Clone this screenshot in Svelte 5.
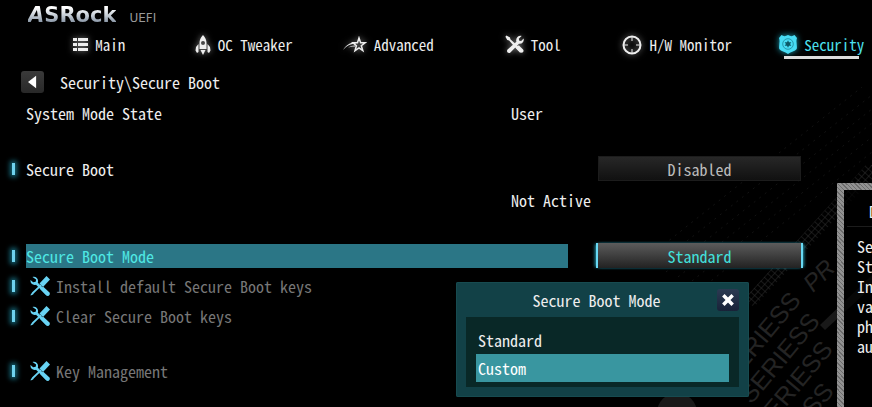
<script lang="ts">
  type Row = {
    id: string;
    label: string;
    text?: string;
    options?: string[];
    value?: string;
    marker?: boolean;
    tool?: boolean;
    gap?: boolean;
  };

  const tabs = [
    { name: "Main", icon: "list" },
    { name: "OC Tweaker", icon: "rocket" },
    { name: "Advanced", icon: "star" },
    { name: "Tool", icon: "tools" },
    { name: "H/W Monitor", icon: "target" },
    { name: "Security", icon: "badge" },
  ];

  const rows: Row[] = [
    { id: "state", label: "System Mode State", text: "User" },
    { id: "boot", label: "Secure Boot", options: ["Disabled", "Enabled"], value: "Disabled", marker: true, gap: true },
    { id: "active", label: "", text: "Not Active" },
    { id: "mode", label: "Secure Boot Mode", options: ["Standard", "Custom"], value: "Standard", marker: true, gap: true },
    { id: "install", label: "Install default Secure Boot keys", marker: true, tool: true },
    { id: "clear", label: "Clear Secure Boot keys", marker: true, tool: true },
    { id: "keys", label: "Key Management", marker: true, tool: true, gap: true },
  ];

  const help = [
    "Secure Boot mode options:",
    "Standard or Custom.",
    "In Custom mode, Secure Boot Policy",
    "variables can be configured by a",
    "physically present user without full",
    "authentication.",
  ];

  let activeTab = $state("Security");
  let selected = $state("mode");
  let open = $state(true);
  let highlighted = $state("Custom");
</script>

{#snippet icon(name: string)}
  {#if name === "list"}
    <svg class="icon" viewBox="0 0 15 15" width="15" height="15">
      <path d="M0 1h4v3H0zM5 1h10v3H5zM0 6h4v3H0zM5 6h10v3H5zM0 11h4v3H0zM5 11h10v3H5z" />
    </svg>
  {:else if name === "rocket"}
    <svg class="icon" viewBox="0 0 16 20" width="16" height="20">
      <path fill-rule="evenodd" d="M8 0C10.500 3 11.500 5 11.500 8v6h-7V8C4.500 5 5.500 3 8 0zM8 6a2 2 0 1 0 0 4 2 2 0 0 0 0-4z" />
      <path d="M3.500 9v8L2 18 .5 15.500 1 12zM12.500 9v8l1.500 1 1.500-2.500L15 12zM5.500 15h5L8 20z" />
    </svg>
  {:else if name === "star"}
    <svg class="icon" viewBox="0 0 24 18" width="24" height="18">
      <path fill="none" stroke="currentColor" stroke-width="1.500" d="M16 2l1.600 4.800H22l-3.700 2.900 1.500 4.900-3.800-2.800-4 2.800 1.400-4.900L10 6.800h4.500z" />
      <path d="M0 14C3 9 7 6.500 12 6.200l1 1.300C8 7.600 4 9.500 0 14zM5 12c2.500-2 4.500-2.600 7.500-2.500l-.5 1c-3-.1-5 .3-7 1.500z" />
    </svg>
  {:else if name === "tools"}
    <svg class="icon" viewBox="0 0 20 20" width="19" height="19">
      <path d="M1.500.5l3.800 2.200.4 1.800 10 9.300 2.800 2.400-2.600 2.600-2.800-3.100L4.300 5.800l-1.900-.5L.4 1.800z" />
      <path d="M17.500 1l-3 3 .5 2 2 .4 2.600-2.600c.8 3-1.600 6-4.900 5.300l-9 9.200c-2 1.600-4.800-.8-3-3L12 7C10.800 3.500 14 .2 17.500 1z" />
      <path d="M12.500 12.500l2-1.800 4.500 4.500c1.600 2-.8 4.500-3 3l-4.500-4.500z" />
    </svg>
  {:else if name === "target"}
    <svg class="icon" viewBox="0 0 20 20" width="20" height="20">
      <circle cx="10" cy="10" r="8.500" fill="none" stroke="currentColor" stroke-width="2" />
      <path stroke="currentColor" stroke-width="1" d="M10 2v4M10 14v4M2 10h4M14 10h4" />
    </svg>
  {:else}
    <svg class="icon" viewBox="0 0 18 19" width="18" height="19">
      <path d="M2.500 0c2 1.500 4 1.500 6.500 0 2.500 1.500 4.500 1.500 6.500 0L18 3c-1.500 4 .5 7-.3 11C16 16.500 12 16.500 9 19c-3-2.500-7-2.500-8.700-5C-.5 10 1.500 7 0 3z" />
      <circle cx="9" cy="9" r="5.300" fill="none" stroke="#2698ac" />
      <path fill="#0d5968" d="M9 5.200l1 2h2.300L11.100 9l1.200 1.800H10l-1 2-1-2H5.700L6.900 9 5.700 7.200H8z" />
    </svg>
  {/if}
{/snippet}

<div class="page">
  <svg class="backdrop" viewBox="0 0 260 320" width="260" height="320" aria-hidden="true">
    <defs>
      <pattern id="mesh" width="5" height="5" patternUnits="userSpaceOnUse" patternTransform="rotate(-48)">
        <path d="M0 0h5M0 0v5" stroke="#303030" fill="none" />
      </pattern>
    </defs>
    <g stroke="#131313" stroke-dasharray="2 5">
      <path d="M30 175L250 0M42 180L260 8M54 185L260 22M66 190L260 36M80 194L260 50M94 198L260 65" />
    </g>
    <path fill="url(#mesh)" d="M132 212L254 78l6 0v14L142 220z" />
    <g class="series" text-anchor="end">
      <text transform="translate(190 214) rotate(-50)">SERIESS</text>
      <text transform="translate(209 235) rotate(-50)">SERIESS</text>
      <text transform="translate(222 263) rotate(-50)">SERIESS</text>
      <text transform="translate(223 305) rotate(-50)">SERIESS</text>
    </g>
    <g class="pro">
      <text transform="translate(201 206) rotate(-45)">PR</text>
    </g>
    <path fill="#191919" d="M208 238l52-50v12l-47 43z" />
    <circle cx="65" cy="326" r="20" fill="#191919" />
  </svg>

  <header>
    <div class="brand">
      <span class="logo"><i>A</i>SRock</span>
      <span class="uefi">UEFI</span>
    </div>
    <nav>
      {#each tabs as tab}
        <button class="tab" class:active={tab.name === activeTab} onclick={() => (activeTab = tab.name)}>
          {@render icon(tab.icon)}
          <span>{tab.name}</span>
        </button>
      {/each}
    </nav>
  </header>

  <div class="crumbs">
    <button class="back" aria-label="Back">
      <svg viewBox="0 0 10 14" width="9" height="14"><path d="M9 0v14L0 7z" /></svg>
    </button>
    <span>Security\Secure Boot</span>
  </div>

  <main>
    <div class="list">
      {#each rows as row}
        <div class="row" class:gap={row.gap} class:selected={row.id === selected} class:tool={row.tool}>
          {#if row.marker}<span class="marker"></span>{/if}
          {#if row.tool}
            <button class="label" onclick={() => (selected = row.id)}>
              <svg viewBox="0 0 20 20" width="20" height="20">
                <path d="M2.500 1C6 0 9 3 7.800 6.800L18.500 17c1.500 2-.5 3.500-2.500 2L6 8.700C3 9.600 0 7.500.5 4l2.700 2.300 2.500-.5.400-2.300z" />
                <path d="M16.500 0L20 3.500l-7 7.500L9.500 7.500z" />
                <path d="M10.500 8.500l1.200 1.200-8 7.800-.6 1L.8 19.500l-.3-.5 1.700-2.800z" />
                <path d="M13 10.500l6.500 6c1.200 2-1 4.300-3 3l-6.200-6.300z" />
              </svg>
              {row.label}
            </button>
          {:else if row.label}
            <label class="label" for={row.id}>{row.label}</label>
          {/if}
          {#if row.options}
            <select id={row.id} bind:value={row.value} onfocus={() => (selected = row.id)}>
              {#each row.options as option}
                <option>{option}</option>
              {/each}
            </select>
          {:else if row.text}
            <output class="text" id={row.id}>{row.text}</output>
          {/if}
        </div>
      {/each}

      {#if open}
        <div class="dialog" role="dialog" aria-labelledby="dialog-title">
          <div class="title">
            <span id="dialog-title">Secure Boot Mode</span>
            <button class="close" aria-label="Close" onclick={() => (open = false)}>
              <svg viewBox="0 0 12 12" width="14" height="14"><path d="M2 2l8 8M10 2l-8 8" /></svg>
            </button>
          </div>
          <div class="options">
            {#each ["Standard", "Custom"] as option}
              <button class:highlighted={option === highlighted} onclick={() => (highlighted = option)}>{option}</button>
            {/each}
          </div>
        </div>
      {/if}
    </div>

    <aside>
      <div class="help">
        <h2>Description</h2>
        <p>
          {#each help as line}{line}<br />{/each}
        </p>
      </div>
    </aside>
  </main>
</div>

<style>
  :global(body) {
    margin: 0;
    background: #000;
  }

  .page {
    position: relative;
    display: flex;
    flex-direction: column;
    min-height: 100vh;
    overflow: hidden;
    isolation: isolate;
    background: #000;
    color: #eee;
    font-family: "Noto Sans Mono CJK JP", "Liberation Mono", monospace;
    font-size: 16px;
    line-height: 20px;
  }

  .backdrop {
    position: absolute;
    right: 0;
    bottom: 0;
    z-index: -1;
    font-family: "Liberation Sans", sans-serif;
  }
  .series {
    fill: #242424;
    font-size: 25px;
  }
  .pro {
    fill: #242424;
    font-size: 24px;
    font-style: italic;
  }

  button,
  select {
    margin: 0;
    padding: 0;
    border: 0;
    background: none;
    color: inherit;
    font: inherit;
    cursor: pointer;
  }

  svg {
    flex: none;
    fill: currentColor;
  }

  .brand {
    display: flex;
    align-items: baseline;
    gap: 13px;
    height: 32px;
    padding-left: 28px;
    line-height: 30px;
  }
  .logo {
    background: linear-gradient(#fff 25%, #c8d0d8 50%, #8794a4 75%);
    background-clip: text;
    color: transparent;
    font-family: "DejaVu Sans", sans-serif;
    font-size: 21px;
    font-weight: bold;
  }
  .uefi {
    color: #999;
    font-family: "DejaVu Sans", sans-serif;
    font-size: 12px;
  }

  /* the tab strip runs slightly past the right edge */
  nav {
    display: grid;
    grid-template-columns: repeat(6, 1fr);
    margin: 0 -22px 0 27px;
    font-size: 15px;
  }
  .tab {
    display: flex;
    justify-content: center;
    align-items: center;
    gap: 7px;
    height: 25px;
    white-space: nowrap;
  }
  .icon {
    filter: drop-shadow(0 0 3px #888);
  }
  .active {
    position: relative;
    color: #4de0ef;
  }
  .active .icon {
    color: #48dcf4;
    filter: drop-shadow(0 0 3px #1b9fb5);
  }
  .active::after {
    content: "";
    position: absolute;
    left: 50%;
    bottom: -2px;
    width: 75px;
    height: 3px;
    margin-left: -38px;
    background: #ddd;
  }

  .crumbs {
    display: flex;
    align-items: center;
    gap: 16px;
    height: 24px;
    padding: 13px 0 3px 21px;
  }
  .back {
    display: flex;
    justify-content: center;
    align-items: center;
    width: 23px;
    height: 22px;
    border-radius: 3px;
    background: linear-gradient(#3a3a3a, #282828);
    color: #fff;
  }

  main {
    display: grid;
    flex: 1;
    grid-template-columns: 1fr 35px;
  }
  .list {
    position: relative;
    padding-right: 34px;
  }
  .row {
    display: grid;
    grid-template-columns: 26px 485fr 57fr 28px 207px;
    align-items: center;
    height: 31px;
  }
  .gap {
    margin-top: 25px;
  }
  .marker {
    grid-area: 1 / 1;
    justify-self: center;
    width: 3px;
    height: 12px;
    background: #6fd2ee;
    box-shadow: 0 0 5px 2px #156a7c;
  }
  .label {
    grid-area: 1 / 2 / 2 / 4;
    line-height: 24px;
    white-space: nowrap;
  }
  .text {
    grid-area: 1 / 3 / 2 / 6;
  }
  .selected .label {
    background: #2b7686;
    color: #4fe8e4;
  }
  .row.tool {
    height: 30px;
  }
  .tool .label {
    display: flex;
    align-items: center;
    gap: 6px;
    padding-left: 4px;
    color: #777;
    text-align: left;
  }
  .tool svg {
    color: #68d3f4;
  }

  select {
    grid-area: 1 / 5;
    appearance: none;
    height: 25px;
    margin: 0 2px;
    border-radius: 0;
    background: linear-gradient(#282828, #101010);
    box-shadow: inset 0 0 0 1px #1c1c1c;
    color: #bbb;
    text-align: center;
    text-align-last: center;
    outline: none;
  }
  .selected select {
    margin: 0;
    border: solid #69d9f4;
    border-width: 0 2px;
    background: linear-gradient(#5c5c5c, #222);
    box-shadow: -2px 0 3px -1px #2696aa, 2px 0 3px -1px #2696aa;
    color: #43e0dc;
  }

  .dialog {
    position: absolute;
    top: 185px;
    right: 88px;
    box-sizing: border-box;
    width: 293px;
    padding: 6px 10px 10px;
    border-radius: 2px;
    background: #124147;
    box-shadow: inset 0 0 0 1px #174b50;
  }
  .title {
    display: grid;
    grid-template-columns: 10px 1fr 22px;
    align-items: center;
    height: 23px;
    margin-bottom: 6px;
    text-align: center;
  }
  .title span {
    grid-column: 2;
  }
  .close {
    display: flex;
    justify-content: center;
    align-items: center;
    height: 22px;
    border-radius: 3px;
    background: linear-gradient(#2b3a52, #182238);
    color: #fff;
  }
  .close path {
    stroke: currentColor;
    stroke-width: 3;
  }
  .options {
    display: flex;
    flex-direction: column;
    padding: 9px 10px 5px;
    background: #092827;
  }
  .options button {
    height: 28px;
    padding-left: 2px;
    text-align: left;
  }
  .options .highlighted {
    background: #3996a0;
    color: #fff;
  }

  aside {
    display: flex;
    margin-top: 86px;
  }
  .help {
    flex: none;
    width: 330px;
    border-left: 7px solid;
    border-top: 7px solid;
    border-image: repeating-linear-gradient(45deg, #929292 0 2px, #6c6c6c 2px 3px) 7;
    background: rgba(0, 0, 0, 0.7);
  }
  h2 {
    margin: 0 3px;
    padding: 11px 0 5px 22px;
    border-bottom: 1px solid #1c1c1c;
    font-size: 16px;
    font-weight: normal;
  }
  p {
    margin: 9px 13px;
    white-space: nowrap;
  }
</style>
